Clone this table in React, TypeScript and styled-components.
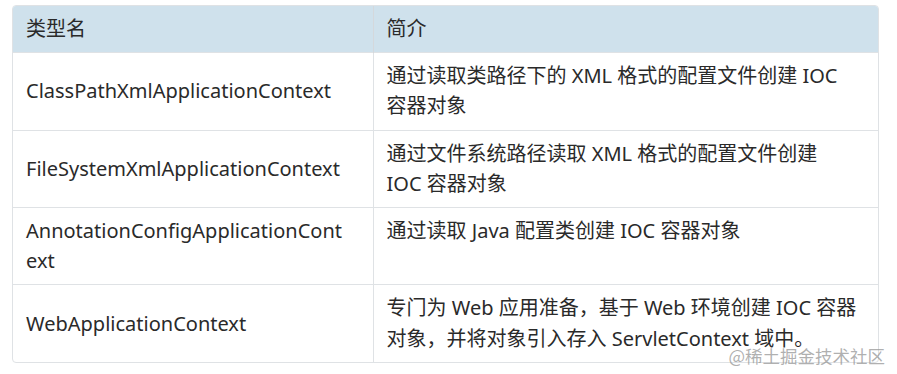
import React from "react";
import styled, { createGlobalStyle } from "styled-components";

const GlobalStyle = createGlobalStyle`
  body {
    margin: 0;
    background: #fff;
    font-family: "Noto Sans", "Noto Sans CJK SC", sans-serif;
  }
`;

const Page = styled.div`
  position: relative;
  width: 897px;
  height: 374px;
  padding: 5px 0 0 12px;
  box-sizing: border-box;
`;

const Frame = styled.div`
  width: 867px;
  border: 1px solid #dfe2e5;
  border-radius: 4px;
  overflow: hidden;
  box-sizing: border-box;
`;

const Table = styled.table`
  width: 100%;
  border-collapse: collapse;
  table-layout: fixed;
  font-size: 20px;
  line-height: 30.2px;
  color: #2a2a2a;
`;

const Cell = styled.td<{ $first?: boolean }>`
  padding: 8px 13px;
  vertical-align: ${(p) => (p.$first ? "middle" : "top")};
  word-break: normal;
  border-left: ${(p) => (p.$first ? "none" : "1px solid #dfe2e5")};
  border-top: 1px solid #dfe2e5;
`;

const Head = styled.th<{ $first?: boolean }>`
  padding: 8px 13px;
  text-align: left;
  font-weight: normal;
  background: #cfe1ec;
  border-left: ${(p) => (p.$first ? "none" : "1px solid #d4d8dc")};
`;

const Watermark = styled.span`
  position: absolute;
  right: 12px;
  bottom: 6px;
  font-size: 17.5px;
  color: rgba(150, 150, 150, 0.75);
  font-family: "Noto Sans CJK SC", sans-serif;
`;

const rows: [React.ReactNode, React.ReactNode][] = [
  ["ClassPathXmlApplicationContext", <>通过读取类路径下的 XML 格式的配置文件创建 IOC<br />容器对象</>],
  ["FileSystemXmlApplicationContext", <>通过文件系统路径读取 XML 格式的配置文件创建<br />IOC 容器对象</>],
  [<>AnnotationConfigApplicationCont<wbr />ext</>, "通过读取 Java 配置类创建 IOC 容器对象"],
  ["WebApplicationContext", <>专门为 Web 应用准备，基于 Web 环境创建 IOC 容器<br />对象，并将对象引入存入 ServletContext 域中。</>],
];

export default function App() {
  return (
    <Page>
      <GlobalStyle />
      <Frame>
        <Table>
          <colgroup>
            <col style={{ width: 360 }} />
            <col />
          </colgroup>
          <thead>
            <tr>
              <Head $first>类型名</Head>
              <Head>简介</Head>
            </tr>
          </thead>
          <tbody>
            {rows.map(([name, desc], i) => (
              <tr key={i}>
                <Cell $first>{name}</Cell>
                <Cell>{desc}</Cell>
              </tr>
            ))}
          </tbody>
        </Table>
      </Frame>
      <Watermark>@稀土掘金技术社区</Watermark>
    </Page>
  );
}
